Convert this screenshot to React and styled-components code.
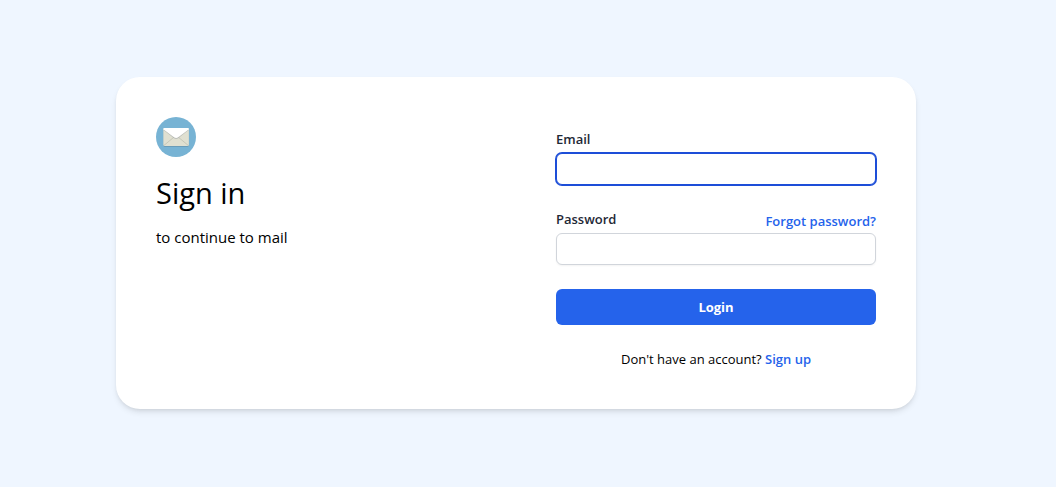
import React from "react";
import styled, { createGlobalStyle } from "styled-components";

const GlobalStyle = createGlobalStyle`
  *, *::before, *::after { box-sizing: border-box; }
  body {
    margin: 0;
    background: #eff6ff;
    color: #000;
    font-family: "Segoe UI", "Open Sans", "Noto Sans", sans-serif;
    font-size: 13px;
    line-height: 20px;
  }
`;

const Page = styled.main`
  min-height: 100vh;
  display: flex;
  align-items: center;
  justify-content: center;
  padding: 24px 40px 25px 16px;
`;

const Card = styled.section`
  width: 100%;
  max-width: 800px;
  display: grid;
  grid-template-columns: 1fr 1fr;
  gap: 80px;
  padding: 40px;
  border-radius: 24px;
  background: #fff;
  box-shadow: 0 4px 6px -1px rgba(0, 0, 0, 0.1), 0 2px 4px -2px rgba(0, 0, 0, 0.1);
`;

const Logo = styled.svg`
  display: block;
  width: 40px;
  height: 40px;
`;

const Title = styled.h1`
  margin: 16px 0 12px;
  font-size: 29px;
  line-height: 40px;
  font-weight: 400;
`;

const Subtitle = styled.p`
  margin: 0;
  font-size: 15px;
  line-height: 24px;
`;

const Form = styled.form`
  display: flex;
  flex-direction: column;
  gap: 24px;
  padding-top: 12px;
`;

const Field = styled.div`
  display: flex;
  flex-direction: column;
  gap: 4px;
`;

const FieldHead = styled.div`
  display: flex;
  justify-content: space-between;
  height: 20px;
`;

const Label = styled.label`
  font-weight: 600;
  color: #1f2937;
`;

const TextInput = styled.input`
  width: 100%;
  height: 32px;
  padding: 4px 12px;
  border: 1px solid #d1d5db;
  border-radius: 6px;
  background: #fff;
  font: inherit;
  box-shadow: 0 1px 2px rgba(0, 0, 0, 0.05);
  caret-color: transparent;

  &:focus {
    outline: none;
    border-color: #1d4ed8;
    box-shadow: 0 0 0 1px #1d4ed8;
  }
`;

const TextLink = styled.a`
  font-weight: 600;
  color: #2563eb;
  text-decoration: none;
`;

const ForgotLink = styled(TextLink)`
  padding-top: 2px;
`;

const Button = styled.button`
  height: 36px;
  border: 0;
  border-radius: 6px;
  background: #2563eb;
  color: #fff;
  font: inherit;
  font-weight: 700;
  cursor: pointer;
`;

const Footer = styled.p`
  margin: 0;
  text-align: center;
`;

function MailLogo() {
  return (
    <Logo viewBox="0 0 40 40" aria-hidden="true">
      <circle cx="20" cy="20" r="20" fill="#77b3d4" />
      <rect x="7.5" y="12" width="25.2" height="17.8" rx="1.5" fill="#231f20" opacity=".2" />
      <rect x="7.3" y="11" width="25.6" height="18" rx="1.3" fill="#e0e0d1" />
      <path d="M8 28.4l9.6-8M32.2 28.4l-9.6-8" stroke="#c3c4b5" strokeWidth=".9" fill="none" />
      <path d="M7.5 13l10.4 8.3q2.2 1.6 4.4 0L32.7 13z" fill="#4f5d73" opacity=".25" />
      <path d="M7.3 12.2q0-1.2 1.3-1.2h23q1.3 0 1.3 1.2L22.2 20.2q-2.1 1.5-4.2 0z" fill="#fff" />
    </Logo>
  );
}

export default function App() {
  return (
    <>
      <GlobalStyle />
      <Page>
        <Card>
          <header>
            <MailLogo />
            <Title>Sign in</Title>
            <Subtitle>to continue to mail</Subtitle>
          </header>
          <Form onSubmit={(event) => event.preventDefault()}>
            <Field>
              <FieldHead>
                <Label htmlFor="email">Email</Label>
              </FieldHead>
              <TextInput id="email" type="email" autoComplete="email" autoFocus />
            </Field>
            <Field>
              <FieldHead>
                <Label htmlFor="password">Password</Label>
                <ForgotLink href="#forgot">Forgot password?</ForgotLink>
              </FieldHead>
              <TextInput id="password" type="password" autoComplete="current-password" />
            </Field>
            <Button type="submit">Login</Button>
            <Footer>
              Don't have an account? <TextLink href="#signup">Sign up</TextLink>
            </Footer>
          </Form>
        </Card>
      </Page>
    </>
  );
}
